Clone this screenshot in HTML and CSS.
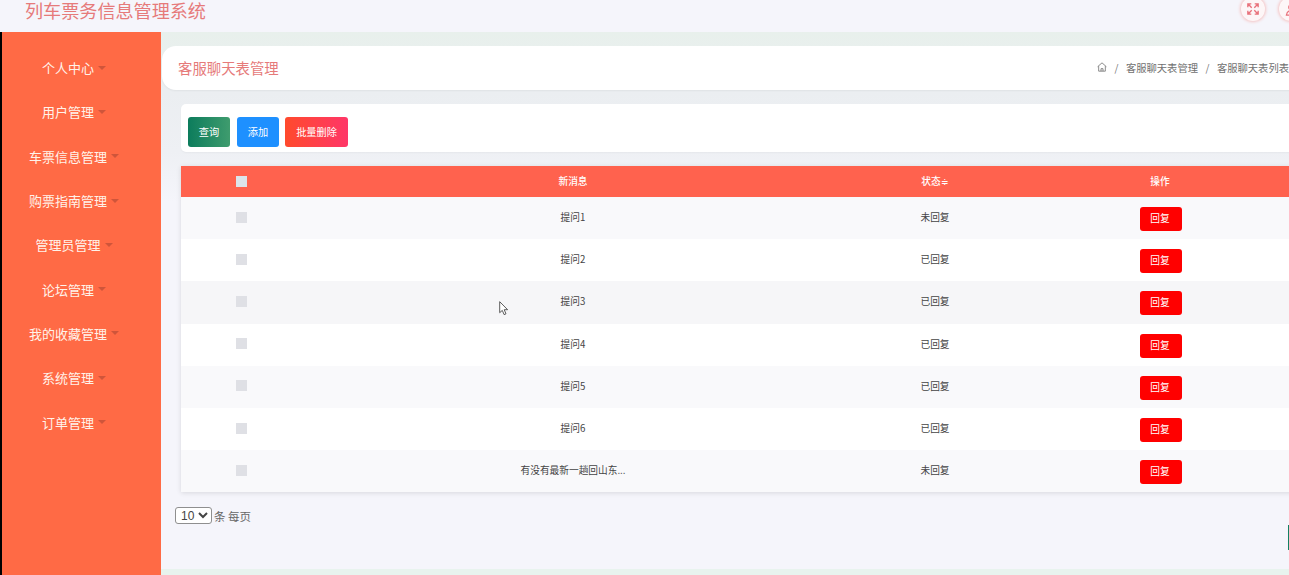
FILE: index.html
```html
<!DOCTYPE html>
<html lang="zh">
<head>
<meta charset="utf-8">
<title>列车票务信息管理系统</title>
<link rel="stylesheet" href="styles.css">
</head>
<body>
<div class="app">
  <header class="header">
    <h1 class="brand">列车票务信息管理系统</h1>
    <div class="header-actions">
      <span class="round-icon">
        <svg viewBox="0 0 14 14" width="12" height="12" fill="none" stroke="#e8707a" stroke-width="1.6"><path d="M1 5V1h4M1 1l4.5 4.5M13 5V1H9M13 1L8.500 5.500M1 9v4h4M1 13l4.500-4.500M13 9v4H9M13 13L8.500 8.500"/></svg>
      </span>
      <span class="round-icon">
        <svg viewBox="0 0 14 14" width="13" height="13" fill="none" stroke="#e8707a" stroke-width="1.300"><circle cx="7" cy="4.500" r="3"/><path d="M1.500 13c.5-3.500 2.500-5 5.500-5s5 1.500 5.500 5z"/></svg>
      </span>
    </div>
  </header>
  <div class="layout">
    <nav class="sidebar">
      <a class="nav-item">个人中心<i class="caret"></i></a>
      <a class="nav-item">用户管理<i class="caret"></i></a>
      <a class="nav-item">车票信息管理<i class="caret"></i></a>
      <a class="nav-item">购票指南管理<i class="caret"></i></a>
      <a class="nav-item">管理员管理<i class="caret"></i></a>
      <a class="nav-item">论坛管理<i class="caret"></i></a>
      <a class="nav-item">我的收藏管理<i class="caret"></i></a>
      <a class="nav-item">系统管理<i class="caret"></i></a>
      <a class="nav-item">订单管理<i class="caret"></i></a>
    </nav>
    <main class="main">
      <section class="page-head">
        <h2 class="page-title">客服聊天表管理</h2>
        <div class="crumbs">
          <svg class="home" viewBox="0 0 12 12" width="10" height="10" fill="none" stroke="#666" stroke-width="0.9"><path d="M.7 5.700 6 1l5.300 4.700M2 5v6h8V5M4.800 11V8h2.400v3"/></svg>
          <span class="sep">/</span><span>客服聊天表管理</span><span class="sep">/</span><span>客服聊天表列表</span>
        </div>
      </section>
      <section class="toolbar">
        <button class="btn btn-query">查询</button>
        <button class="btn btn-add">添加</button>
        <button class="btn btn-del">批量删除</button>
      </section>
      <table class="grid">
        <colgroup><col class="c1"><col class="c2"><col class="c3"><col class="c4"></colgroup>
        <thead>
          <tr><th><span class="check check-head"></span></th><th>新消息</th><th>状态<span class="sort">≑</span></th><th class="th-action">操作</th></tr>
        </thead>
        <tbody>
          <tr class="r1"><td><span class="check"></span></td><td>提问1</td><td>未回复</td><td><button class="reply">回复</button></td></tr>
          <tr class="r2"><td><span class="check"></span></td><td>提问2</td><td>已回复</td><td><button class="reply">回复</button></td></tr>
          <tr class="r3"><td><span class="check"></span></td><td>提问3</td><td>已回复</td><td><button class="reply">回复</button></td></tr>
          <tr class="r2"><td><span class="check"></span></td><td>提问4</td><td>已回复</td><td><button class="reply">回复</button></td></tr>
          <tr class="r1"><td><span class="check"></span></td><td>提问5</td><td>已回复</td><td><button class="reply">回复</button></td></tr>
          <tr class="r2"><td><span class="check"></span></td><td>提问6</td><td>已回复</td><td><button class="reply">回复</button></td></tr>
          <tr class="r1"><td><span class="check"></span></td><td>有没有最新一趟回山东...</td><td>未回复</td><td><button class="reply">回复</button></td></tr>
        </tbody>
      </table>
      <div class="page-size">
        <select class="size-select"><option>10</option></select>
        <span>条 每页</span>
      </div>
      <div class="pager-btn"></div>
      <div class="foot"></div>
    </main>
  </div>
  <svg class="cursor" viewBox="0 0 10 15" width="10" height="15"><path d="M.7.7v11l2.600-2.300 1.800 4.200 1.900-.8-1.800-4.100h3.400z" fill="#fff" stroke="#333" stroke-width="0.8"/></svg>
</div>
</body>
</html>
```

FILE: styles.css
```css
* { box-sizing: border-box; }
html, body { margin: 0; height: 575px; overflow: hidden; background: #f5f5fb; }
body { font-family: "Noto Sans CJK SC", "Liberation Sans", sans-serif; }

.app { position: relative; width: 1320px; height: 575px; display: flex; flex-direction: column; }

.header { height: 32px; flex: none; display: flex; background: #f5f5fb; padding: 0 17px 0 25px; justify-content: space-between; }
.brand { margin: 0; font-size: 18.100px; font-weight: 400; line-height: 21px; color: #e67a7a; }
.header-actions { display: flex; gap: 14px; margin-top: -3px; }
.round-icon { width: 24px; height: 24px; border-radius: 50%; background: #fdf6f7; box-shadow: 0 0 3px 1px #f4c4c4; display: flex; align-items: center; justify-content: center; }

.layout { flex: 1; display: flex; background: #000; padding-left: 2px; min-height: 0; }

.sidebar { width: 159px; flex: none; background: #ff6a45; padding: 13.500px 15px 0 0; display: flex; flex-direction: column; align-items: center; }
.nav-item { height: 44.3px; flex: none; display: flex; align-items: center; font-size: 13px; color: #fff3ea; white-space: nowrap; }
.caret { width: 0; height: 0; margin-left: 4px; border: 4px solid transparent; border-top-color: #cf553a; border-bottom-width: 0; }

.main { flex: 1; min-width: 0; display: flex; flex-direction: column; padding-top: 14px; background: linear-gradient(#e8f0ec 0, #ebeef1 60px, #eef0f4 120px, #f5f5fb 170px); }

.page-head { height: 44px; flex: none; margin-left: 1px; background: #fff; border-radius: 14px 0 0 14px; padding: 0 31px 2px 16px; display: flex; align-items: center; justify-content: space-between; box-shadow: 0 1px 2px rgba(0,0,0,.05); }
.page-title { margin: 0; font-size: 14.4px; font-weight: 400; color: #e67a7a; }
.crumbs { display: flex; align-items: center; font-size: 10.300px; color: #707070; }
.sep { margin: 0 7.500px; font-size: 10px; color: #777; }
.home { display: block; }

.toolbar { height: 48px; flex: none; margin: 14px 0 14px 20px; background: #fff; border-radius: 5px 0 0 5px; padding: 8px 7px 0; display: flex; align-items: center; gap: 7px; box-shadow: 0 1px 2px rgba(0,0,0,.04); }
.btn { height: 30px; border: 0; border-radius: 3px; color: #fff; font: inherit; font-size: 10.200px; padding: 0 0 2px; }
.btn-query { width: 42px; background: linear-gradient(90deg, #0c7c5c, #3f9c6e); }
.btn-add { width: 42px; background: #1e90ff; }
.btn-del { width: 63px; margin-left: -1px; background: linear-gradient(90deg, #ff4a2c, #ff3668); }

.grid { width: 1116px; flex: none; margin-left: 20px; border-collapse: collapse; table-layout: fixed; box-shadow: 0 1px 5px rgba(0,0,0,.12); font-size: 9.700px; color: #444; text-align: center; }
.c1 { width: 120px; }
.c2 { width: 544px; }
.c3 { width: 180px; }
.c4 { width: 272px; }
.grid th { height: 31px; padding: 0 0 2px; background: #ff624e; color: #fff; font-weight: 500; }
.grid .th-action { padding-right: 2px; }
.grid td { height: 42.200px; padding: 0 0 2px; }
.r1 { background: #f9f9fb; }
.r2 { background: #fff; }
.r3 { background: #f6f6f8; }
.sort { font-size: 9px; }
.check { display: block; width: 11px; height: 11px; margin: 0 auto; background: #dfe0e5; }
.check-head { margin-top: 2px; background: #dce4ea; }
.reply { display: block; width: 42px; height: 24px; margin: 4px auto 0; padding: 0 2px 2px 0; border: 0; border-radius: 3px; background: #f00; color: #fff; font: inherit; }

.page-size { flex: none; margin: 15px 0 0 14px; height: 17px; display: flex; align-items: center; gap: 2px; font-size: 11.500px; color: #666; }
.size-select { width: 37px; height: 17px; padding: 0 0 0 1px; border: 1px solid #8f8f8f; border-radius: 3px; background: #fff; color: #444; font-family: "Liberation Sans", sans-serif; font-size: 12px; }

.pager-btn { flex: none; width: 30px; height: 25px; margin: 1px 0 0 1127px; background: #128062; }
.foot { flex: none; height: 6px; margin-top: auto; background: #e8f3ee; }

.cursor { position: absolute; left: 499px; top: 301px; }
```
